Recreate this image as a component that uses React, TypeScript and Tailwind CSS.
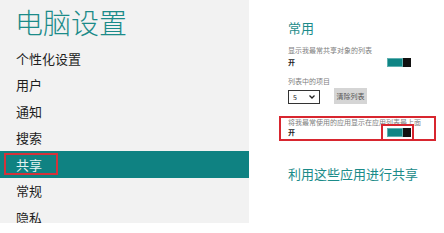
import React from "react";

function Toggle() {
  return (
    <div className="flex h-[9px] w-[24px]">
      <div className="h-full w-[16px] border border-[#5fb0b0] bg-[#0f8585]" />
      <div className="h-full w-[8px] bg-[#111]" />
    </div>
  );
}

const items = ["个性化设置", "用户", "通知", "搜索", "共享", "常规", "隐私"];

export default function App() {
  return (
    <div className="flex h-[233px] w-[444px] overflow-hidden bg-white font-['Noto_Sans_CJK_SC','Microsoft_YaHei',sans-serif]">
      <div className="h-[223px] w-[249px] shrink-0 overflow-hidden bg-[#f2f2f2]">
        <div className="pl-[15px] pt-[8px] text-[28px] font-light leading-[28px] text-[#1b8b89]">电脑设置</div>
        <div className="mt-[9px] flex flex-col">
          {items.map((t) =>
            t === "共享" ? (
              <div key={t} className="relative flex h-[26.5px] items-center bg-[#0f8282] pl-[16px] text-[13px] text-[#e4f3f2]">
                {t}
                <div className="absolute left-[4px] top-[2px] h-[22px] w-[54px] border-2 border-[#d3323a]" />
              </div>
            ) : (
              <div key={t} className="flex h-[26.5px] items-center pl-[16px] text-[13px] text-[#1e1e1e]">
                {t}
              </div>
            )
          )}
        </div>
      </div>
      <div className="flex h-full flex-1 flex-col bg-white pl-[39px] pt-[20px]">
        <div className="text-[13px] leading-[15px] text-[#1b8b89]">常用</div>
        <div className="mt-[11px] text-[7px] leading-[9px] text-[#808080]">显示我最常共享对象的列表</div>
        <div className="mt-[3px] flex h-[9px] w-[123px] items-center justify-between">
          <span className="text-[7px] font-bold leading-[9px] text-[#222]">开</span>
          <Toggle />
        </div>
        <div className="mt-[10px] text-[7px] leading-[9px] text-[#808080]">列表中的项目</div>
        <div className="mt-[2px] flex items-end">
          <div className="flex h-[14px] w-[32px] items-center justify-between border border-[#333] px-[4px] text-[7px] leading-none text-[#222]">
            <span>5</span>
            <svg width="6" height="4" viewBox="0 0 6 4">
              <path d="M0.5 0.5 L3 3 L5.5 0.5" fill="none" stroke="#222" strokeWidth="1.3" />
            </svg>
          </div>
          <div className="ml-[14px] flex h-[16px] w-[33px] items-center justify-center bg-[#d5d5d5] text-[7px] leading-none text-[#555]">
            清除列表
          </div>
        </div>
        <div className="relative ml-[-9px] mt-[12px] h-[25px] w-[157px] border-2 border-[#d8262f] pl-[7px]">
          <div className="text-[7px] leading-[9px] whitespace-nowrap text-[#808080]">将我最常使用的应用显示在应用列表最上面</div>
          <div className="mt-[1px] flex h-[9px] w-[123px] items-center justify-between">
            <span className="text-[7px] font-bold leading-[9px] text-[#222]">开</span>
            <Toggle />
          </div>
          <div className="absolute left-[100px] top-[6px] h-[17px] w-[33px] border-2 border-[#d8262f]" />
        </div>
        <div className="mt-[25px] text-[13px] leading-[15px] text-[#1b8b89]">利用这些应用进行共享</div>
      </div>
    </div>
  );
}
